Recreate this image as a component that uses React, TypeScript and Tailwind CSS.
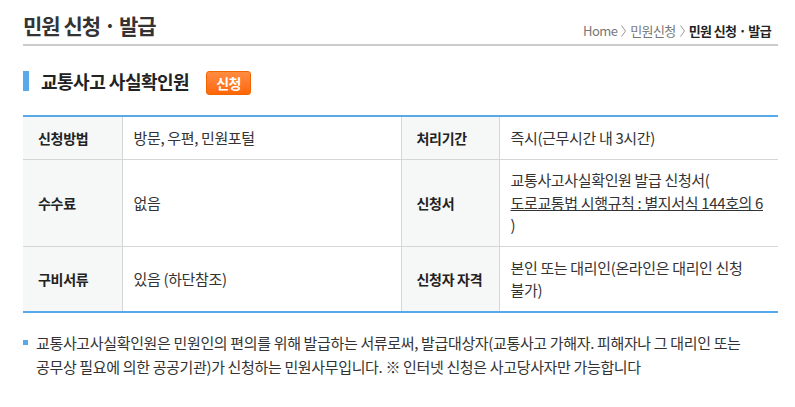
import React from 'react';

const font = { fontFamily: '"Noto Sans CJK KR", "Noto Sans", sans-serif' };

function Chevron() {
  return (
    <svg width="5" height="12" viewBox="0 0 5 12" className="mx-[4px] inline-block">
      <polyline points="0.5,0.5 4.5,6 0.5,11.5" fill="none" stroke="#999" strokeWidth="1" />
    </svg>
  );
}

export default function App() {
  return (
    <main className="bg-white min-h-[407px] pl-[23px] pr-[17px] text-[#333]" style={font}>
      <div className="flex items-end justify-between pt-[10px] pb-[4px] border-b-2 border-[#cccccc]">
        <h1 className="text-[21px] leading-[30px] font-bold tracking-[-1px] text-[#333]">민원 신청 · 발급</h1>
        <div className="flex items-center text-[13px] leading-[18px] tracking-[-0.6px] pr-[7px]">
          <span className="text-[#777]">Home</span>
          <Chevron />
          <span className="text-[#777]">민원신청</span>
          <Chevron />
          <span className="font-bold text-[#222]">민원 신청 · 발급</span>
        </div>
      </div>

      <div className="flex items-start mt-[25px]">
        <span className="w-[6px] h-[20px] bg-[#58a9e9]" />
        <h2 className="ml-[12px] text-[18px] leading-[20px] font-bold tracking-[-0.5px] text-[#222]">교통사고 사실확인원</h2>
        <span className="ml-[17px] w-[45px] h-[24px] flex items-center justify-center rounded-[3px] border border-[#f26500] bg-gradient-to-b from-[#ff8c40] to-[#ff6600] text-white text-[14px] font-bold tracking-[-0.5px]">
          신청
        </span>
      </div>

      <table className="mt-[20px] w-full table-fixed border-collapse border-t-2 border-b-2 border-[#58a9e9] text-[15px] leading-[22.5px] tracking-[-0.35px]">
        <colgroup>
          <col className="w-[99px]" />
          <col className="w-[279px]" />
          <col className="w-[98px]" />
          <col />
        </colgroup>
        <tbody>
          <tr className="border-b border-[#d6d6d6]">
            <th className="bg-[#f6f7f7] text-left text-[14px] font-bold tracking-[-0.3px] text-[#222] px-[15px] py-[9.5px] border-r border-[#d6d6d6]">신청방법</th>
            <td className="px-[11px] py-[9.5px] border-r border-[#d6d6d6]">방문, 우편, 민원포털</td>
            <th className="bg-[#f6f7f7] text-left text-[14px] font-bold tracking-[-0.3px] text-[#222] px-[15px] py-[9.5px] border-r border-[#d6d6d6]">처리기간</th>
            <td className="px-[11px] py-[9.5px]">즉시(근무시간 내 3시간)</td>
          </tr>
          <tr className="border-b border-[#d6d6d6]">
            <th className="bg-[#f6f7f7] text-left text-[14px] font-bold tracking-[-0.3px] text-[#222] px-[15px] py-[9.5px] border-r border-[#d6d6d6]">수수료</th>
            <td className="px-[11px] py-[9.5px] border-r border-[#d6d6d6]">없음</td>
            <th className="bg-[#f6f7f7] text-left text-[14px] font-bold tracking-[-0.3px] text-[#222] px-[15px] py-[9.5px] border-r border-[#d6d6d6]">신청서</th>
            <td className="px-[11px] py-[9.5px]">
              교통사고사실확인원 발급 신청서(
              <br />
              <a href="#" className="underline text-[#333] whitespace-nowrap">도로교통법 시행규칙 : 별지서식 144호의 6</a>
              <br />)
            </td>
          </tr>
          <tr>
            <th className="bg-[#f6f7f7] text-left text-[14px] font-bold tracking-[-0.3px] text-[#222] px-[15px] py-[9.5px] border-r border-[#d6d6d6]">구비서류</th>
            <td className="px-[11px] py-[9.5px] border-r border-[#d6d6d6]">있음 (하단참조)</td>
            <th className="bg-[#f6f7f7] text-left text-[14px] font-bold tracking-[-0.3px] text-[#222] px-[15px] py-[9.5px] border-r border-[#d6d6d6] whitespace-nowrap">신청자 자격</th>
            <td className="px-[11px] py-[9.5px]">
              본인 또는 대리인(온라인은 대리인 신청
              <br />
              불가)
            </td>
          </tr>
        </tbody>
      </table>

      <ul className="mt-[18px] text-[15px] leading-[24px] tracking-[-0.35px] text-[#333]">
        <li className="flex">
          <span className="mt-[9px] w-[5px] h-[5px] bg-[#58a9e9] shrink-0" />
          <p className="ml-[8px]">
            <span className="whitespace-nowrap">교통사고사실확인원은 민원인의 편의를 위해 발급하는 서류로써, 발급대상자(교통사고 가해자. 피해자나 그 대리인 또는</span>
            <br />
            공무상 필요에 의한 공공기관)가 신청하는 민원사무입니다. ※ 인터넷 신청은 사고당사자만 가능합니다
          </p>
        </li>
      </ul>
    </main>
  );
}
